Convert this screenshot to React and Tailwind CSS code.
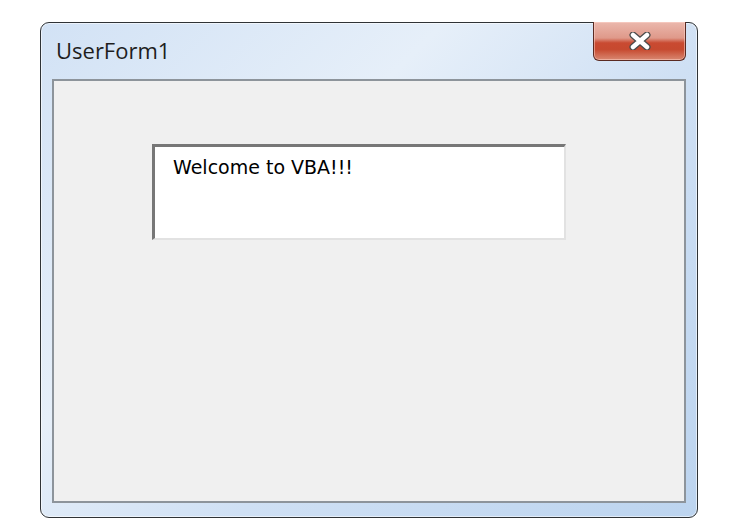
import React from 'react';

const CloseGlyph = () => (
  <svg width="24" height="18" viewBox="0 0 24 18">
    <path
      d="M5 3 L19 15 M19 3 L5 15"
      stroke="#4a4a4a"
      strokeWidth="7"
      strokeLinecap="round"
    />
    <path
      d="M5 3 L19 15 M19 3 L5 15"
      stroke="#ffffff"
      strokeWidth="4.5"
      strokeLinecap="round"
    />
  </svg>
);

const App = () => {
  return (
    <div className="w-[730px] h-[531px] bg-white pl-[40px] pt-[22px]" style={{ fontFamily: '"Noto Sans", sans-serif' }}>
      <div className="w-[658px] h-[496px] rounded-[9px] border border-[#2f3336] bg-[linear-gradient(135deg,#d2e2f5_0%,#e6eff9_35%,#cfe0f4_60%,#bcd4ef_100%)] shadow-[inset_0_0_0_1px_rgba(255,255,255,0.55)] flex flex-col px-[11px] pb-[14px]">
        {/* title bar */}
        <div className="h-[56px] flex items-start justify-between">
          <span className="mt-[13px] ml-[4px] text-[22px] leading-[28px] text-[#1e1e1e]" style={{ fontFamily: '"Open Sans", sans-serif' }}>
            UserForm1
          </span>
          <button className="w-[93px] h-[39px] -mt-[1px] rounded-b-[6px] border border-t-0 border-[#5a2a22] bg-[linear-gradient(to_bottom,#ebb8ad_0%,#df998a_42%,#c94a31_55%,#c6492f_72%,#d98872_100%)] shadow-[inset_0_0_0_1px_rgba(255,215,205,0.5)] flex items-center justify-center">
            <CloseGlyph />
          </button>
        </div>
        {/* client area */}
        <div className="flex-1 bg-[#f0f0f0] border-2 border-[#8d949b]">
          <div className="ml-[98px] mt-[63px] w-[414px] h-[96px] bg-white border-t-[3px] border-l-[3px] border-r-2 border-b-2 border-t-[#777777] border-l-[#777777] border-r-[#e2e2e2] border-b-[#e2e2e2] pl-[18px] pt-[7px]">
            <span className="text-[19px] leading-[26px] text-black" style={{ fontFamily: '"DejaVu Sans", sans-serif' }}>
              Welcome to VBA!!!
            </span>
          </div>
        </div>
      </div>
    </div>
  );
};

export default App;
